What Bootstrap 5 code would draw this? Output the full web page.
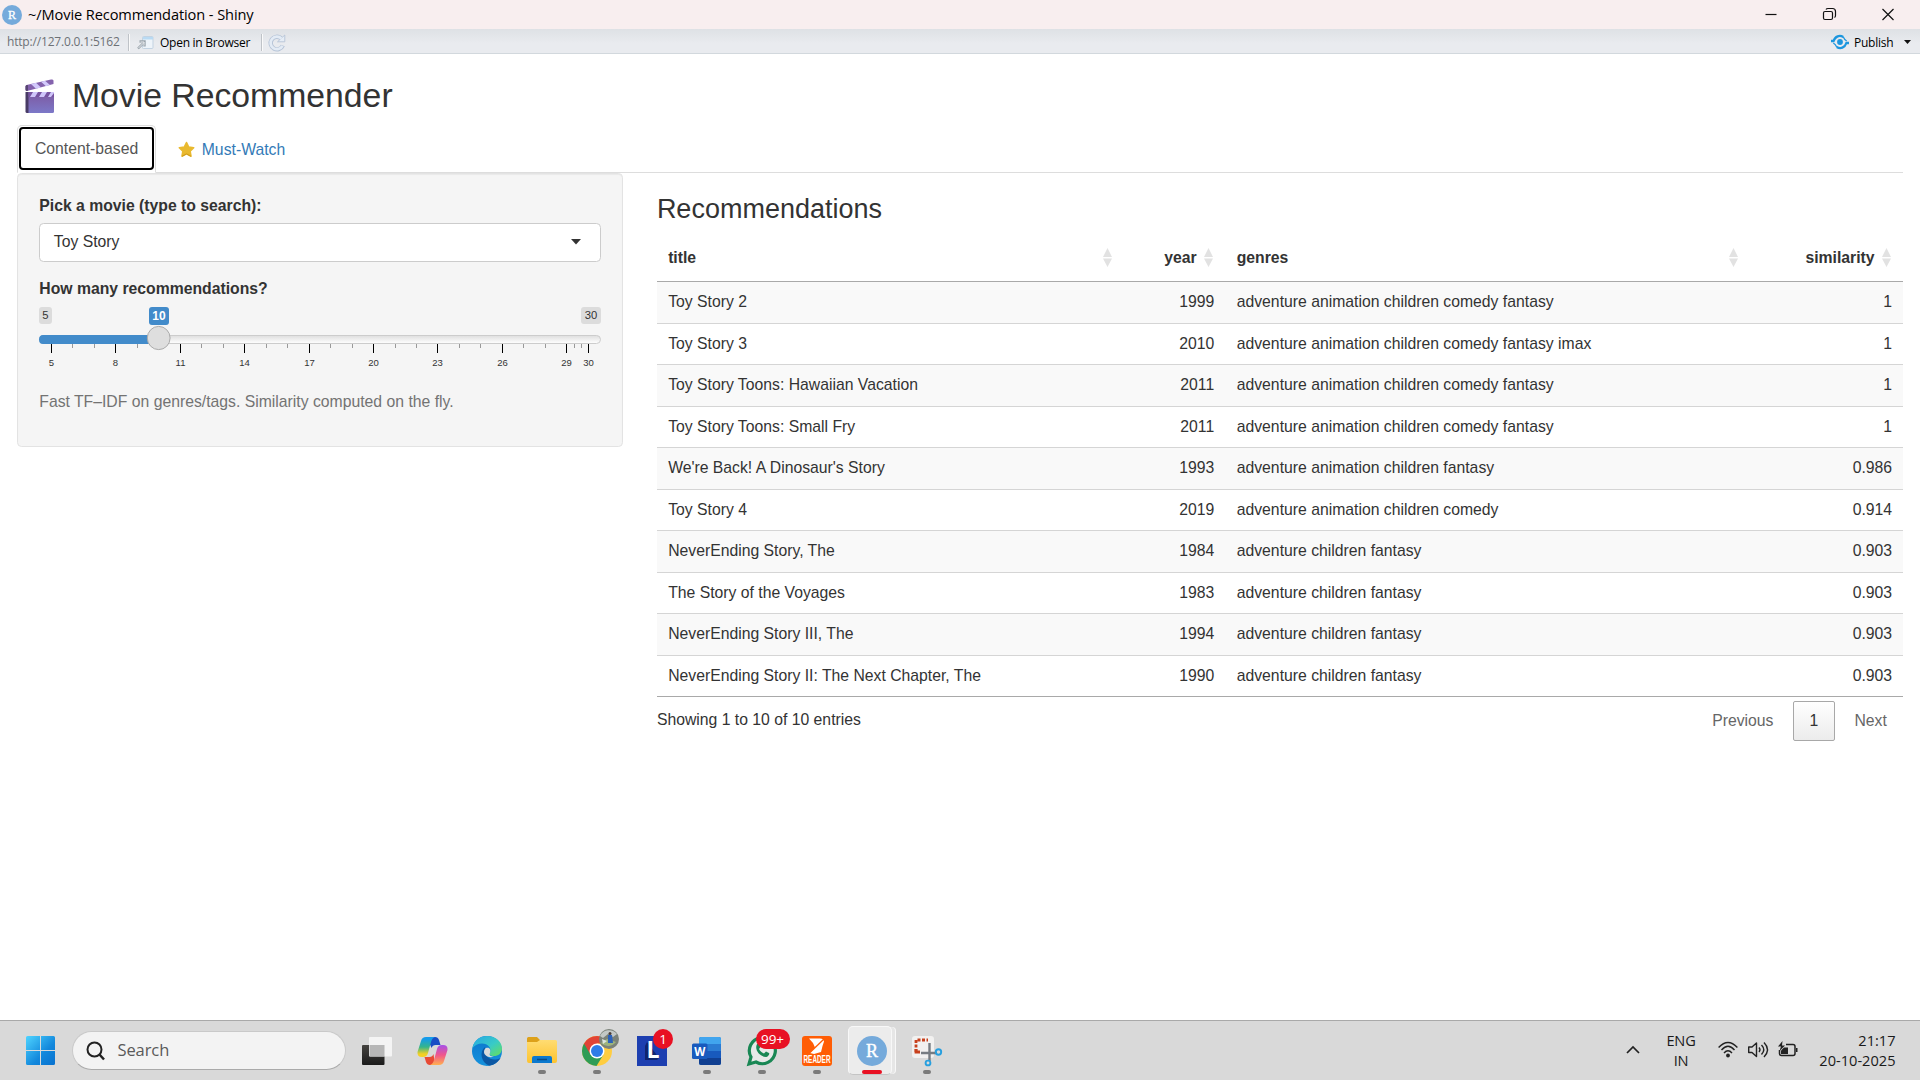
<!DOCTYPE html>
<html lang="en">
<head>
<meta charset="utf-8">
<meta name="viewport" content="width=device-width, initial-scale=1">
<title>~/Movie Recommendation - Shiny</title>
<link href="https://cdn.jsdelivr.net/npm/bootstrap@5.3.0/dist/css/bootstrap.min.css" rel="stylesheet">
<style>
html,body{height:100%;overflow:hidden}
body{font-family:"Liberation Sans",Arial,sans-serif;font-size:15.75px;line-height:22.5px;color:#333;background:#fff}
svg{display:block;flex:none;overflow:visible}
.ui-font{font-family:"Open Sans","Noto Sans",sans-serif}
.win-title{height:29px;background:#f8eeef;color:#000;padding:0 12px 0 2px;font-size:14.6px}
.win-title .caption{margin-left:6px;white-space:nowrap;letter-spacing:-.1px}
.toolbar-strip{height:25px;background:linear-gradient(#dee1e5,#e9ebef 60%);border-bottom:1px solid #d2d8dd;font-size:12px;color:#000;padding:2px 9px 0 7px;white-space:nowrap}
.tb-sep{width:2px;height:17px;background:#bfc3c8;border-right:1px solid #fafafa}
#url{width:121px;letter-spacing:-.18px;margin-top:1px;color:#6d7176}
#ob{margin:1px 6px 0 7px}
#obt{width:101px;letter-spacing:-.26px;margin-top:3px}
#rf{margin:1px 0 0 5px}
#pub{margin:3px 11px 0 5px;width:39px;letter-spacing:-.26px}
.viewer{padding:0 16.875px}
.app-title{font-size:33.75px;line-height:37.125px;margin:23px 0 10.75px;font-weight:400;height:37.125px}
#clap{margin:2px 17px 0 8px}
.tabs-line{border-bottom:1px solid #ddd;height:48px}
.tabs-line .nav-link{padding:12.25px 16.875px 10px;border:1px solid transparent;color:#337ab7;height:47.5px;line-height:22.5px;white-space:nowrap}
.tabs-line .nav-link.active{border:1px solid #ddd;border-bottom-color:#fff;color:#555;width:139px;height:48px;border-radius:5px 5px 0 0;padding:12.25px 17px 10px;background:#fff;position:relative}
.tabs-line .nav-link.active::after{content:"";position:absolute;inset:1px 1px 2px;border:2px solid #000;border-radius:4px}
#mw{gap:7px;margin-left:4px}
.side-col{width:606px}
.well{background:#f5f5f5;border:1px solid #e3e3e3;border-radius:4.5px;height:274px;padding:21.4px 20.9px 0 21.4px;box-shadow:inset 0 1px 1px rgba(0,0,0,.05)}
.well label{font-weight:700;display:block;margin-bottom:5.6px}
.pick{height:39px;border:1px solid #ccc;border-radius:4.5px;background:#fff;padding:0 19px 2px 13.5px;margin-bottom:16px}
.hint{color:#737373;margin:19px 0 0}
.main-col{flex:1;margin-left:34px}
.main-col h3{font-size:27px;line-height:29.7px;margin:22px 0 11px}
.rec{table-layout:fixed;border-collapse:separate;border-spacing:0;width:1246.500px;margin:0}
.rec th{height:46.5px;padding:0 11.25px 1px;border-bottom:1px solid #a9a9a9;vertical-align:middle}
.rec td{height:41.5px;padding:0 11.25px 0;border-bottom:1px solid #d5d5d5;vertical-align:middle}
.rec tr:nth-child(odd) td{background:#f9f9f9}
.rec tbody tr:last-child td{border-bottom-color:#a9a9a9}
.sorter{padding-right:1px}
.sorter.num{gap:7.5px}
.table-foot{height:47px}
.pager{color:#666;gap:19.5px;padding:1px 16.5px 0 0}
.page-now{width:42px;height:40px;border:1px solid #a8a8a8;border-radius:2px;background:linear-gradient(#fff,#ececec);color:#333}
.taskbar{height:60px;background:#d9d9d9;border-top:1px solid #a9a9a9;color:#1a1a1a}
.start-btn{margin-left:26px}
.search-pill{width:274px;height:39px;margin:0 3.5px 0 17px;border-radius:20px;background:#f3f3f3;border:1px solid #c9c9c9;border-bottom-color:#aaa;padding-left:13px;font-size:16.5px;color:#5a5a5a}
.search-pill span{margin-left:12.5px;letter-spacing:-.1px}
.app{width:55px;height:59px}
.app.run::after{content:"";position:absolute;left:23.5px;top:49px;width:8px;height:4px;border-radius:2px;background:#7b7b7b}
.app.now::after{left:17.5px;width:20px;background:#e81123}
.active-tile{position:absolute;left:3px;top:5px;width:44px;height:49px;border-radius:5px;background:#ececec;border:1px solid #f8f8f8;border-bottom-color:#c4c4c4;box-shadow:4px 0 0 -1px #e6e6e6,5px 0 0 -1px #f8f8f8}
.app svg{position:relative}
.app svg.avatar{position:absolute;left:29px;top:8px}
.note{position:absolute;top:8px;height:20px;border-radius:10px;background:#e81123;color:#fff;font-size:13.5px;line-height:20px;text-align:center}
.note-one{left:28.5px;width:20px}
.note-many{left:21px;width:34px}
.tray{font-size:14.6px;line-height:20px}
.tray svg{margin-bottom:1px}
#lang{width:48px;margin:0 12.5px 1px 17px;letter-spacing:-.2px}
#clock{width:86px;margin:0 24.5px 1px 12px;white-space:nowrap}
</style>
<script src="https://cdn.jsdelivr.net/npm/bootstrap@5.3.0/dist/js/bootstrap.bundle.min.js"></script>
</head>
<body class="d-flex flex-column">

<!-- window caption -->
<header class="win-title ui-font d-flex align-items-center">
  <svg width="20" height="20" viewBox="0 0 20 20"><circle cx="10" cy="10" r="10" fill="#75aadb"/><text x="10" y="14" font-family="Liberation Serif,serif" font-size="12" fill="#fff" stroke="#fff" stroke-width=".3" text-anchor="middle">R</text></svg>
  <span class="caption">~/Movie Recommendation - Shiny</span>
  <svg class="ms-auto" width="154" height="29" fill="none" stroke="#111" stroke-width="1.2">
    <path d="M11.500 14.500h11"/>
    <rect x="69.500" y="11.500" width="9" height="8" rx="1.500"/><path d="M72 9.500q.5-1 2-1h4.500q3 0 3 3v4q0 1.500-1 2"/>
    <path d="M128.500 9l11 11m0-11l-11 11"/>
  </svg>
</header>

<!-- viewer toolbar -->
<div class="toolbar-strip ui-font d-flex align-items-center">
  <span id="url">http://127.0.0.1:5162</span>
  <span class="tb-sep"></span>
  <svg id="ob" width="17" height="14"><rect x="5.500" y=".5" width="10.500" height="12" rx="1" fill="#eef4fa" stroke="#c3d3e2"/><path d="M6 1h10v2.500H6z" fill="#b9daf3"/><path d="M1 12.500l5.500-5.500M2.500 5.500h5v5" fill="none" stroke="#9aa4ac" stroke-width="2.400"/><path d="M1.500 12l5.500-5.500M3.500 6h3.500v3.500" fill="none" stroke="#eef1f4" stroke-width=".9"/></svg>
  <span id="obt">Open in Browser</span>
  <span class="tb-sep"></span>
  <svg id="rf" width="18" height="18" fill="none"><path d="M14.800 11.500A6.300 6.300 0 1 1 13 4.200" stroke="#b5c3d6" stroke-width="4.400"/><path d="M9.500 7.800h7.300V1z" fill="#e6edf6" stroke="#b5c3d6" stroke-width=".9"/><path d="M14.500 11.800A6.300 6.300 0 1 1 13.500 4.600" stroke="#e3ebf5" stroke-width="2.700"/></svg>
  <svg class="ms-auto" width="18" height="16" fill="none" stroke="#1c96de"><circle cx="9" cy="8" r="2.900" fill="#1c96de" stroke="none"/><path d="M0 7h2.600C4.200 2.200 8.500.8 12.300 3M18 9h-2.600C13.800 13.800 9.500 15.200 5.700 13" stroke-width="2.300"/><path d="M12.300 3q1.200 2.800 3.400 4M5.700 13q-1.200-2.800-3.400-4" stroke-width="1.300"/></svg>
  <span id="pub">Publish</span>
  <svg width="7" height="4"><path d="M0 0h7L3.500 4z" fill="#111"/></svg>
</div>

<!-- Shiny application -->
<main class="viewer flex-grow-1">
  <h2 class="app-title d-flex align-items-center">
    <svg width="30" height="35" viewBox="0 0 30 35" id="clap">
      <defs><linearGradient id="cg" x2="0" y2="1"><stop offset="0" stop-color="#7d58a0"/><stop offset="1" stop-color="#7c78c8"/></linearGradient></defs>
      <path d="M.5 13v19.500q0 1.500 1.500 1.500h2V13z" fill="#493b66"/>
      <path d="M3.500 13H29v19.500q0 1.500-1.500 1.500h-24z" fill="url(#cg)"/>
      <path d="M3.500 13H29v5H3.500z" fill="#7653a0"/>
      <path d="M8 13h5l-3 5H5zm9 0h5l-3 5h-5zm9 0h3v1l-3 4h-3z" fill="#cfc5fa"/>
      <path d="M.5 7.500q0-1 1-1.500L26 .5q2-.5 2.500 1V5L2 12q-1.500 0-1.500-1.500z" fill="#8462ad"/>
      <path d="M6 5l5 4.700 5-1.300-5-4.600zm10-2.300l5 4.500 4-1.100-5-4.400z" fill="#d2c9fb"/>
      <path d="M.5 7.500q0-1 1-1.500H3v5.500l-1 .5q-1.500 0-1.500-1.500z" fill="#584673"/>
    </svg>
    <span>Movie Recommender</span>
  </h2>
  <nav class="nav tabs-line">
    <a class="nav-link active" href="#">Content-based</a>
    <a class="nav-link d-flex align-items-center" id="mw" href="#">
      <svg width="17" height="17" viewBox="0 0 17 17"><path d="M8.500 1.500l2.200 4.500 5 .7-3.600 3.500.9 5-4.500-2.300L4 15.200l.9-5L1.300 6.700l5-.7z" fill="#e9b92f" stroke="#e9b92f" stroke-width="1.600" stroke-linejoin="round"/><path d="M4 15.200l4.500-2.300L13 15.200" fill="none" stroke="#cf9b1c"/></svg>
      <span>Must-Watch</span>
    </a>
  </nav>

  <div class="d-flex">
    <aside class="side-col">
      <div class="well">
        <label>Pick a movie (type to search):</label>
        <div class="pick d-flex align-items-center justify-content-between">
          <span>Toy Story</span>
          <svg width="10" height="6"><path d="M0 0h10L5 5.500z" fill="#333"/></svg>
        </div>
        <label class="mb-0">How many recommendations?</label>
        <svg width="562" height="71" viewBox="0 1 562 71" font-family="Liberation Sans,Arial,sans-serif">
          <defs><linearGradient id="tr" x2="0" y2="1"><stop offset="0" stop-color="#dedede"/><stop offset="1" stop-color="#fff"/></linearGradient></defs>
          <rect x="0" y="7" width="13" height="17" rx="3" fill="#dcdcdc"/><text x="6.500" y="19.200" font-size="11.250" fill="#333" text-anchor="middle">5</text>
          <rect x="542" y="7" width="20" height="17" rx="3" fill="#dcdcdc"/><text x="552" y="19.200" font-size="11.250" fill="#333" text-anchor="middle">30</text>
          <rect x="110" y="7" width="20" height="18" rx="3" fill="#428bca"/><text x="120" y="19.800" font-size="12" font-weight="700" fill="#fff" text-anchor="middle">10</text>
          <rect x=".5" y="35.500" width="561" height="8" rx="4" fill="url(#tr)" stroke="#ccc"/>
          <path d="M4 35h116v9H4q-4 0-4-4.500T4 35z" fill="#428bca"/>
          <g id="ticks"></g>
          <ellipse cx="119.700" cy="38" rx="11.400" ry="11.600" fill="#dedede" stroke="#ababab"/>
        </svg>
        <p class="hint">Fast TF–IDF on genres/tags. Similarity computed on the fly.</p>
      </div>
    </aside>

    <section class="main-col">
      <h3 class="fw-normal">Recommendations</h3>
      <table class="rec">
        <colgroup><col style="width:467.300px"><col style="width:101.300px"><col style="width:525.200px"><col></colgroup>
        <thead><tr id="heads"></tr></thead>
        <tbody id="rows"></tbody>
      </table>
      <div class="table-foot d-flex align-items-center">
        <span>Showing 1 to 10 of 10 entries</span>
        <div class="pager ms-auto d-flex align-items-center">
          <span>Previous</span>
          <span class="page-now d-flex align-items-center justify-content-center">1</span>
          <span>Next</span>
        </div>
      </div>
    </section>
  </div>
</main>

<!-- desktop taskbar -->
<footer class="taskbar ui-font d-flex align-items-center">
  <svg class="start-btn" width="29" height="29"><defs><linearGradient id="wn" gradientUnits="userSpaceOnUse" x2="29" y2="29"><stop offset="0" stop-color="#4fd4ff"/><stop offset=".6" stop-color="#1288dc"/><stop offset="1" stop-color="#0871cf"/></linearGradient></defs><path d="M1.500 0H14v14H0V1.500Q0 0 1.500 0zM15 0h12.500Q29 0 29 1.500V14H15zM0 15h14v14H1.500Q0 29 0 27.500zM15 15h14v12.500q0 1.500-1.500 1.500H15z" fill="url(#wn)"/></svg>
  <div class="search-pill d-flex align-items-center">
    <svg width="19" height="20" fill="none" stroke="#222" stroke-width="2"><circle cx="8.500" cy="8.500" r="7"/><path d="M13.500 13.500l4.500 5" stroke-width="2.500"/></svg>
    <span>Search</span>
  </div>

  <div class="app d-flex align-items-center justify-content-center position-relative">
    <svg width="30" height="28"><defs><linearGradient id="tv" x2="0" y2="1"><stop offset="0" stop-color="#44423f"/><stop offset="1" stop-color="#1b1b1b"/></linearGradient></defs><rect y="8" width="22.500" height="20" rx="1" fill="url(#tv)"/><rect x="7" width="23" height="19.500" rx="1" fill="#f4f4f4"/><path d="M7.500 8h15v11.500h-15z" fill="#b7b7b7"/></svg>
  </div>
  <div class="app d-flex align-items-center justify-content-center position-relative">
    <svg width="31" height="28" viewBox="0 0 31 28"><defs><linearGradient id="ca" x2="0" y2="1"><stop offset=".1" stop-color="#159bea"/><stop offset=".5" stop-color="#35b58b"/><stop offset=".85" stop-color="#f4d025"/></linearGradient><linearGradient id="cb" x2="0" y2="1"><stop offset="0" stop-color="#a650e8"/><stop offset=".5" stop-color="#f0568c"/><stop offset="1" stop-color="#ffb04f"/></linearGradient></defs>
      <path d="M13 0h5q3 0 4 3l1.500 5h-5q-3 0-4 3L12 5z" fill="#184cc5"/><path d="M18 28h-5q-3 0-4-3l-1.500-5h5q3 0 4-3z" fill="#e84a35"/>
      <path d="M9 0h9q-3 1-4 5l-3 11q-1 4-5 4H5q-5 0-4.500-5L4 4q1-4 5-4z" fill="url(#ca)"/><path d="M22 28h-9q3-1 4-5l3-11q1-4 5-4h1q5 0 4.500 5L27 24q-1 4-5 4z" fill="url(#cb)"/></svg>
  </div>
  <div class="app d-flex align-items-center justify-content-center position-relative">
    <svg width="30" height="30" viewBox="0 0 30 30"><defs><linearGradient id="ea" y2="1"><stop offset="0" stop-color="#25a6e7"/><stop offset=".55" stop-color="#39cbc6"/><stop offset="1" stop-color="#68df58"/></linearGradient><linearGradient id="eb" x2="0" y2="1"><stop offset="0" stop-color="#0b75cc"/><stop offset="1" stop-color="#1692dd"/></linearGradient></defs>
      <circle cx="15" cy="15" r="15" fill="url(#eb)"/>
      <path d="M.5 12C2 4 8 0 15 0c9 0 15 6 15 12.500 0 5-4 7.500-8 7.500-3.500 0-5-1-4-3 2-5-2-9.500-8-9.500-4 0-7.500 2-9.500 4.500z" fill="url(#ea)"/>
      <path d="M13 11c-6 5-4 15 4 18.800C23 29 27 25 28.500 22c-8 4-17 0-15.500-11z" fill="#0c58a4"/>
      <path d="M14 12c4-1 5 2 4 5-1 2 0 3.500 4 3.500-5 2-10-1-10-4.500 0-2 1-3.500 2-4z" fill="#dadada"/></svg>
  </div>
  <div class="app run d-flex align-items-center justify-content-center position-relative">
    <svg width="30" height="27"><defs><linearGradient id="fg" x2="0" y2="1"><stop offset="0" stop-color="#ffdc72"/><stop offset="1" stop-color="#fdc32f"/></linearGradient></defs><path d="M0 1.500Q0 0 1.500 0H10l3 3h6v6H0z" fill="#dda11a"/><path d="M0 5h10l3-2h15.500Q30 3 30 4.500V24q0 2-2 2H2q-2 0-2-2z" fill="url(#fg)"/><path d="M5 26v-5q0-2 2-2h16q2 0 2 2v5z" fill="#0c79ce"/><path d="M10 22.500h10" stroke="#074b87" stroke-width="1.500"/></svg>
  </div>
  <div class="app run d-flex align-items-center justify-content-center position-relative">
    <svg width="30" height="30" viewBox="0 0 30 30"><circle cx="15" cy="15" r="15" fill="#ffcd40"/><path d="M15 15L2 7.500A15 15 0 0 0 14.500 30L21.500 18.500z" fill="#2f9c56"/><path d="M15 15L8.500 18.500 2 7.500A15 15 0 0 1 28 7.500H15z" fill="#e24436"/><circle cx="15" cy="15" r="7.500" fill="#fff"/><circle cx="15" cy="15" r="6" fill="#2f7ce8"/></svg>
    <svg class="avatar" width="20" height="20"><circle cx="10" cy="10" r="10" fill="#7b8279"/><path d="M1 7A10 10 0 0 1 18 5l-4 3-5-3-5 4z" fill="#c3c8c6"/><path d="M2 14l6-4 9 3a10 10 0 0 1-15 1z" fill="#9db37d"/><path d="M9 6h4l1 8H9z" fill="#2c62ba"/><circle cx="11" cy="4.500" r="1.500" fill="#493b35"/><path d="M3 10l5 2-4 3z" fill="#dce4df"/></svg>
  </div>
  <div class="app d-flex align-items-center justify-content-center position-relative">
    <svg width="30" height="30"><path d="M0 0h30v30H0z" fill="#1d3fb0"/><path d="M10 6l-2 4v14h12l2-2" fill="#10256e"/><text x="9.500" y="22" font-family="Open Sans,sans-serif" font-size="23" font-weight="700" fill="#fff">L</text></svg>
    <span class="note note-one">1</span>
  </div>
  <div class="app run d-flex align-items-center justify-content-center position-relative">
    <svg width="30" height="28"><rect x="7" width="22" height="28" rx="2" fill="#2b7cd3"/><path d="M7 7V2q0-2 2-2h18q2 0 2 2v5z" fill="#41a5ee"/><path d="M7 14h22v7H7z" fill="#185abd"/><path d="M7 21h22v5q0 2-2 2H9q-2 0-2-2z" fill="#103f91"/><rect y="6.500" width="15.500" height="15.500" rx="1.500" fill="#185abd"/><text x="7.700" y="18.500" font-family="Open Sans,sans-serif" font-size="11.500" font-weight="700" fill="#fff" text-anchor="middle">W</text></svg>
  </div>
  <div class="app run d-flex align-items-center justify-content-center position-relative">
    <svg width="30" height="30" viewBox="0 0 30 30"><path d="M2 28l2-7A13 13 0 1 1 9 26z" fill="#e7e9e8" stroke="#198754" stroke-width="3.200"/><path d="M10 8c1-1 2-.5 2.500.5l1 2.500-1.500 2c1 2 3 4 5 4.500l2-2 3 1.500c1 1-1 4-3 4C13 21 7 14 10 8z" fill="#198754"/></svg>
    <span class="note note-many">99+</span>
  </div>
  <div class="app run d-flex align-items-center justify-content-center position-relative">
    <svg width="30" height="30"><rect width="30" height="30" rx="3" fill="#ff5d05"/><path d="M7 2.500h11q3.500 0 4 3l-1.500 4.500L19 16l-7 2-4-1 5-5.500-2-4.500z" fill="#fff"/><path d="M22 3L8 16.500" stroke="#ff5d05" stroke-width="1.300"/><text x="15" y="27.300" font-family="Liberation Sans,Arial,sans-serif" font-size="10" font-weight="700" fill="#fff" text-anchor="middle" textLength="27" lengthAdjust="spacingAndGlyphs">READER</text></svg>
  </div>
  <div class="app run now d-flex align-items-center justify-content-center position-relative">
    <span class="active-tile"></span>
    <svg width="30" height="30"><circle cx="15" cy="15" r="15" fill="#75aadb"/><text x="15" y="21" font-family="Liberation Serif,serif" font-size="18" fill="#fff" stroke="#fff" stroke-width=".4" text-anchor="middle">R</text></svg>
  </div>
  <div class="app run d-flex align-items-center justify-content-center position-relative">
    <svg width="30" height="30" viewBox="0 0 30 30"><rect width="22" height="22" rx="3" fill="#f2f1f0"/><path d="M4 16V4h12" fill="none" stroke="#c8401c" stroke-width="2.800" stroke-dasharray="3 1.500"/><path d="M4 13v3h4" fill="none" stroke="#c8401c" stroke-width="2.800"/><path d="M9 17h16M17.500 7v18" stroke="#777c82" stroke-width="2.400"/><circle cx="26.500" cy="16" r="2.700" fill="none" stroke="#279fdf" stroke-width="1.900"/><circle cx="16" cy="27" r="2.400" fill="none" stroke="#279fdf" stroke-width="1.900"/></svg>
  </div>

  <div class="tray ms-auto d-flex align-items-center">
    <svg width="14" height="8" fill="none" stroke="#222" stroke-width="1.700"><path d="M1 7l6-6 6 6"/></svg>
    <div class="text-center" id="lang">ENG<br>IN</div>
    <svg width="80" height="18" fill="none" stroke="#222" stroke-width="1.400">
      <circle cx="10" cy="14.500" r="1.900" fill="#222" stroke="none"/><path d="M.6 6.500Q10-3.500 19.400 6.500M3.500 9Q10 1.500 16.500 9M6 12q4-4.500 8 0"/>
      <path d="M30.700 6h3.300l4.500-4v13.500l-4.500-4h-3.300z" stroke-linejoin="round"/><path d="M41 6.500q2 2.300 0 4.500M43.500 4q4.500 4.700 0 9.500M46 1.500q7 7.200 0 14.500"/>
      <path d="M68 3.500h7q2 0 2 2v7q0 2-2 2H63.500q-2 0-2-2V9" stroke-width="1.500"/><path d="M78 7h1.500v4H78z" fill="#222" stroke="none"/><path d="M63 13V9.500l3-3h4v6.500z" fill="#222" stroke="none"/><path d="M64.500 0L60 5.500h3L61.500 10 67 4.500h-3z" fill="#222" stroke="none"/>
    </svg>
    <div class="text-end" id="clock">21:17<br>20-10-2025</div>
  </div>
</footer>

<script>
// table content
const films=[["Toy Story 2",1999,"adventure animation children comedy fantasy","1"],["Toy Story 3",2010,"adventure animation children comedy fantasy imax","1"],["Toy Story Toons: Hawaiian Vacation",2011,"adventure animation children comedy fantasy","1"],["Toy Story Toons: Small Fry",2011,"adventure animation children comedy fantasy","1"],["We're Back! A Dinosaur's Story",1993,"adventure animation children fantasy","0.986"],["Toy Story 4",2019,"adventure animation children comedy","0.914"],["NeverEnding Story, The",1984,"adventure children fantasy","0.903"],["The Story of the Voyages",1983,"adventure children fantasy","0.903"],["NeverEnding Story III, The",1994,"adventure children fantasy","0.903"],["NeverEnding Story II: The Next Chapter, The",1990,"adventure children fantasy","0.903"]];
const arrows='<svg width="9" height="19"><path d="M0 9L4.500 0 9 9zM0 10.500h9L4.500 19z" fill="#e2e2e2"/></svg>';
document.getElementById('heads').innerHTML=['title','year','genres','similarity'].map((h,i)=>`<th><div class="sorter d-flex align-items-center ${i%2?'num justify-content-end':'justify-content-between'}"><span>${h}</span>${arrows}</div></th>`).join('');
document.getElementById('rows').innerHTML=films.map(f=>`<tr><td>${f[0]}</td><td class="text-end">${f[1]}</td><td>${f[2]}</td><td class="text-end">${f[3]}</td></tr>`).join('');
// slider scale, 5 to 30
let scale='';
for(let v=5;v<=30;v++){
  const x=Math.round(12+(v-5)*21.47),big=(v-5)%3===0||v===30;
  scale+=`<path d="M${x+.5} 44v${big?9:4}" stroke="${big?'#000':'#999'}"/>`;
  if(big)scale+=`<text x="${x+.5}" y="66" font-size="9.500" fill="#333" text-anchor="middle">${v}</text>`;
}
scale+='<path d="M535.500 44v4M542.500 44v4" stroke="#999"/>';
document.getElementById('ticks').innerHTML=scale;
</script>
</body>
</html>
